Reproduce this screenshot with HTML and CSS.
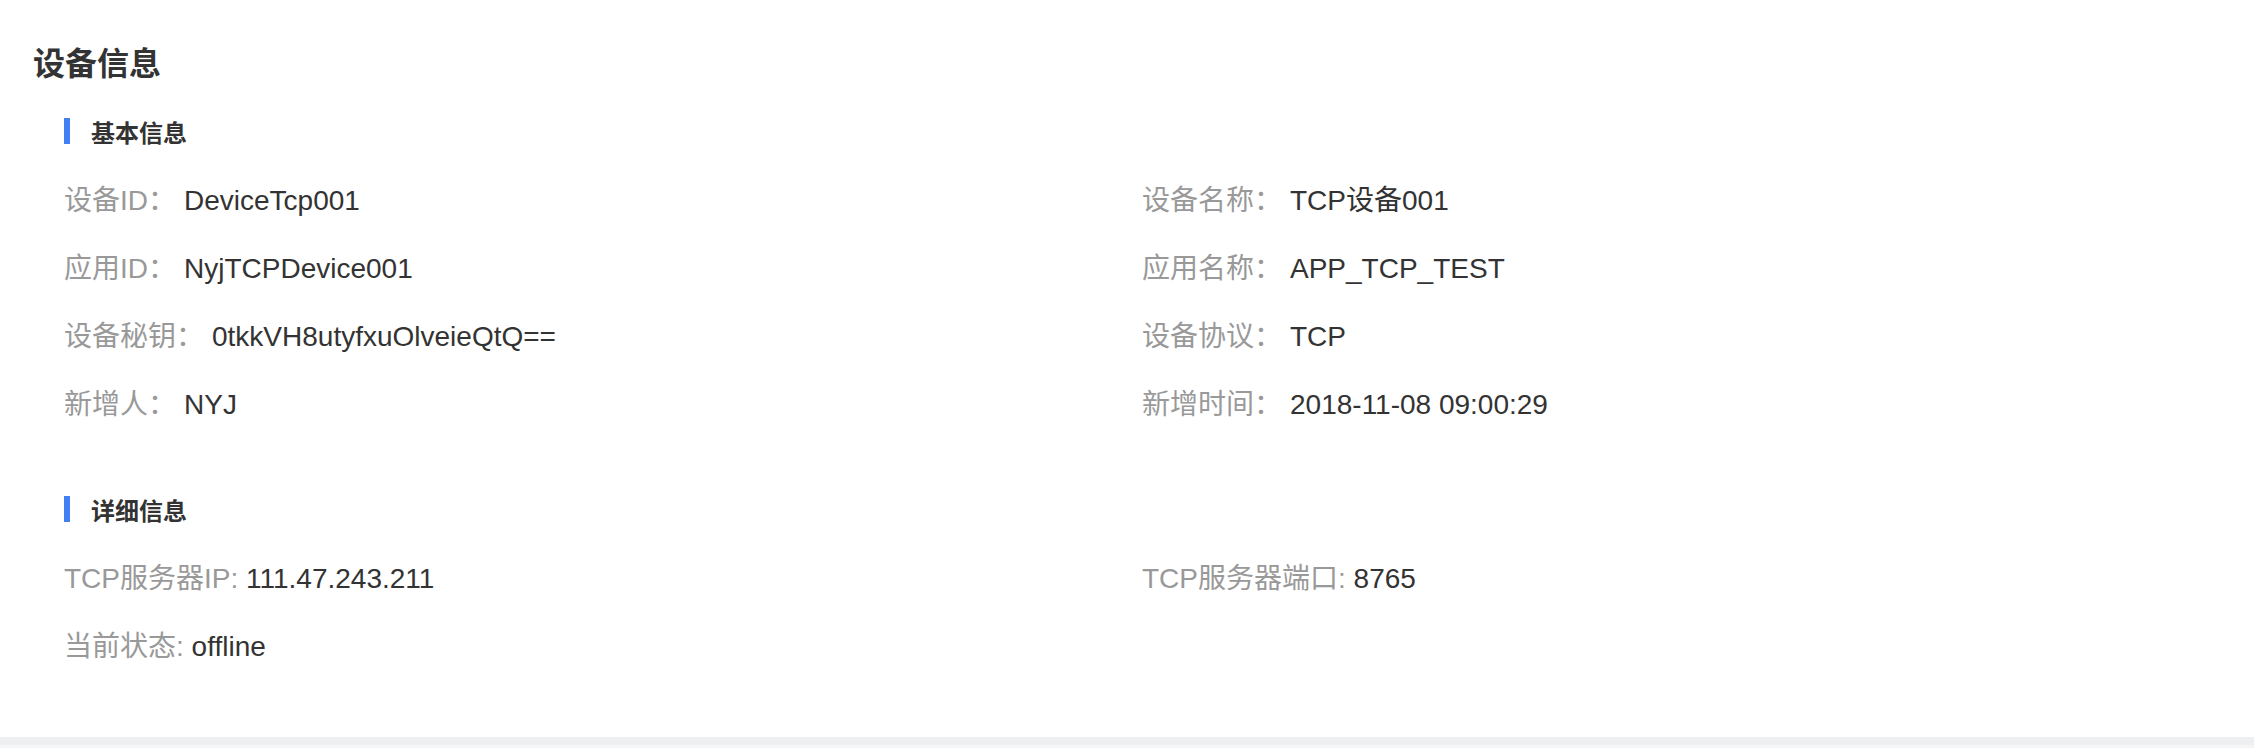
FILE: index.html
```html
<!DOCTYPE html>
<html lang="zh-CN">
<head>
<meta charset="utf-8">
<title>设备信息</title>
<link rel="stylesheet" href="styles.css">
</head>
<body>
<div class="panel">
  <h1 class="title">设备信息</h1>
  <section class="section">
    <h2 class="sub">基本信息</h2>
    <div class="grid">
      <div class="item"><span class="label">设备ID：</span><span class="value">DeviceTcp001</span></div>
      <div class="item"><span class="label">设备名称：</span><span class="value">TCP设备001</span></div>
      <div class="item"><span class="label">应用ID：</span><span class="value">NyjTCPDevice001</span></div>
      <div class="item"><span class="label">应用名称：</span><span class="value">APP_TCP_TEST</span></div>
      <div class="item"><span class="label">设备秘钥：</span><span class="value">0tkkVH8utyfxuOlveieQtQ==</span></div>
      <div class="item"><span class="label">设备协议：</span><span class="value">TCP</span></div>
      <div class="item"><span class="label">新增人：</span><span class="value">NYJ</span></div>
      <div class="item"><span class="label">新增时间：</span><span class="value">2018-11-08 09:00:29</span></div>
    </div>
  </section>
  <section class="section section-detail">
    <h2 class="sub">详细信息</h2>
    <div class="grid">
      <div class="item"><span class="label-plain">TCP服务器IP: </span><span class="value">111.47.243.211</span></div>
      <div class="item"><span class="label-plain">TCP服务器端口: </span><span class="value">8765</span></div>
      <div class="item"><span class="label-plain">当前状态: </span><span class="value">offline</span></div>
    </div>
  </section>
</div>
<div class="footer-band"></div>
</body>
</html>
```
FILE: styles.css
```css
html, body {
  margin: 0;
  padding: 0;
  background: #ffffff;
}
body {
  font-family: "Liberation Sans", "Noto Sans CJK SC", sans-serif;
  color: #333333;
}
.panel {
  padding: 42px 34px 58px 33px;
}
.title {
  margin: 0;
  font-size: 32px;
  line-height: 44px;
  font-weight: bold;
  color: #333333;
}
.section {
  padding-left: 31px;
  margin-top: 11px;
}
.section-detail {
  margin-top: 38px;
}
.sub {
  margin: 0;
  display: flex;
  align-items: center;
  height: 68px;
  font-size: 24px;
  font-weight: bold;
  color: #333333;
}
.sub::before {
  content: "";
  display: block;
  width: 6px;
  height: 26px;
  background: #4080f4;
  margin-right: 21px;
}
.grid {
  display: grid;
  grid-template-columns: 1fr 1fr;
}
.item {
  height: 64px;
  padding-top: 4px;
  line-height: 64px;
  font-size: 28px;
  white-space: nowrap;
}
.label {
  color: #999999;
  margin-right: 8px;
}
.label-plain {
  color: #999999;
  white-space: pre;
}
.value {
  color: #333333;
}
.footer-band {
  height: 8px;
  background: #eeeff1;
  border-bottom: 3px solid #f4f5f6;
}
```
